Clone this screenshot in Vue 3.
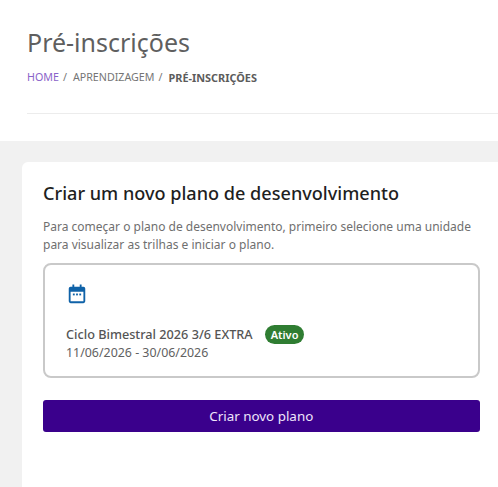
<script setup>
const crumbs = ['APRENDIZAGEM']
</script>

<template>
  <div class="page">
    <header class="head">
      <h1 class="title">Pré-inscrições</h1>
      <nav class="crumbs">
        <a class="home">HOME</a><span class="sep">/</span>
        <template v-for="c in crumbs" :key="c">
          <span class="crumb">{{ c }}</span><span class="sep">/</span>
        </template>
        <strong class="current">PRÉ-INSCRIÇÕES</strong>
      </nav>
      <div class="rule"></div>
    </header>
    <main class="body">
      <section class="card">
        <h2 class="heading">Criar um novo plano de desenvolvimento</h2>
        <p class="intro">Para começar o plano de desenvolvimento, primeiro selecione uma unidade<br>para visualizar as trilhas e iniciar o plano.</p>
        <div class="unit">
          <svg class="cal" viewBox="0 0 24 24" width="22" height="22" aria-hidden="true">
            <path fill="#0f62a8" d="M7 1.5h2V4h6V1.5h2V4h2a2 2 0 0 1 2 2v14a2 2 0 0 1-2 2H5a2 2 0 0 1-2-2V6a2 2 0 0 1 2-2h2V1.5zM5 9.5V20h14V9.5H5z"/>
            <rect fill="#0f62a8" x="7.5" y="11.5" width="2" height="2"/>
            <rect fill="#0f62a8" x="11" y="11.5" width="2" height="2"/>
            <rect fill="#0f62a8" x="14.5" y="11.5" width="2" height="2"/>
          </svg>
          <div class="row">
            <span class="name">Ciclo Bimestral 2026 3/6 EXTRA</span>
            <span class="badge">Ativo</span>
          </div>
          <div class="dates">11/06/2026 - 30/06/2026</div>
        </div>
        <button class="cta" type="button">Criar novo plano</button>
      </section>
    </main>
  </div>
</template>

<style>
html, body { margin: 0; background: #fff; }
</style>

<style scoped>
.page {
  width: 498px;
  height: 487px;
  overflow: hidden;
  display: flex;
  flex-direction: column;
  font-family: "Noto Sans", "Open Sans", sans-serif;
  background: #f1f1f1;
}
.head {
  height: 141px;
  box-sizing: border-box;
  padding: 25px 0 0 27px;
  background: #fff;
}
.title {
  margin: 0;
  font-size: 25px;
  line-height: 34px;
  font-weight: 400;
  color: #5f5f5f;
}
.crumbs {
  display: flex;
  align-items: center;
  margin-top: 10px;
  height: 16px;
  font-size: 10.7px;
  color: #757575;
}
.home { color: #8a63c9; }
.sep { margin: 0 6px 0 4px; color: #777; }
.current { font-weight: 700; font-size: 10.9px; color: #5c5c5c; }
.rule {
  height: 1px;
  margin-top: 28px;
  background: #ececec;
}
.body {
  flex: 1;
  padding: 21px 0 0 22px;
  display: flex;
  min-height: 0;
}
.card {
  flex: 1;
  background: #fff;
  border-radius: 6px 0 0 0;
  padding: 18px 18.5px 0 21px;
}
.heading {
  margin: 0;
  font-size: 18.1px;
  line-height: 26px;
  font-weight: 500;
  color: #1f1f1f;
}
.intro {
  margin: 12px 0 0;
  font-size: 12px;
  line-height: 18px;
  color: #6f6f6f;
}
.unit {
  margin-top: 9px;
  height: 115px;
  box-sizing: border-box;
  border: 2px solid #c9c9c9;
  border-radius: 8px;
  padding: 18px 21px 0;
}
.cal { display: block; }
.row {
  display: flex;
  align-items: center;
  gap: 12px;
  margin-top: 19px;
  height: 20px;
}
.name {
  font-size: 12.7px;
  font-weight: 500;
  color: #555;
}
.badge {
  background: #2f7d32;
  color: #fff;
  font-size: 11px;
  font-weight: 600;
  line-height: 19px;
  padding: 0 6px;
  border-radius: 10px;
}
.dates {
  font-size: 12.4px;
  line-height: 18px;
  color: #616161;
}
.cta {
  display: block;
  width: 100%;
  height: 32px;
  margin-top: 22px;
  border: 0;
  border-radius: 3px;
  background: #3a008c;
  color: #efe6fb;
  font: 400 13.4px "Noto Sans", sans-serif;
}
</style>
